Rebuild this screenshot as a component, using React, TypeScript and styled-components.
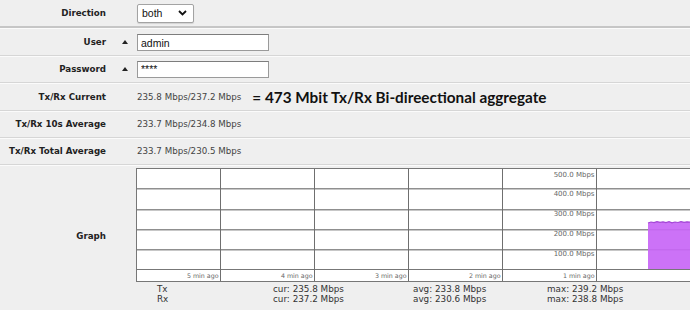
import React from "react";
import styled, { createGlobalStyle } from "styled-components";

const Global = createGlobalStyle`
  html, body { margin: 0; padding: 0; }
  body {
    background: #efefef;
    overflow: hidden;
    font-family: "DejaVu Sans", Verdana, sans-serif;
    color: #333;
  }
`;

const Page = styled.div`
  width: 690px;
  height: 310px;
  overflow: hidden;
  display: flex;
  flex-direction: column;
`;

const Row = styled.div<{ $h: number; $strong?: boolean }>`
  box-sizing: border-box;
  height: ${(p) => p.$h}px;
  display: grid;
  grid-template-columns: 106px 31px 1fr;
  align-items: center;
  border-bottom: ${(p) => (p.$strong ? "2px solid #c6c6c6" : "1px solid #d6d6d6")};
  box-shadow: 0 1px 0 #fbfbfb;
`;

const Label = styled.div`
  font-weight: bold;
  font-size: 8.7px;
  color: #222;
  text-align: right;
  white-space: nowrap;
`;

const MarkerCell = styled.div`
  display: flex;
  justify-content: flex-end;
  padding-right: 9px;
`;

const Marker = styled.span`
  width: 0;
  height: 0;
  border-left: 3px solid transparent;
  border-right: 3px solid transparent;
  border-bottom: 4px solid #222;
`;

const Cell = styled.div<{ $pt?: number }>`
  display: flex;
  align-items: center;
  padding-top: ${(p) => p.$pt ?? 0}px;
  min-width: 0;
`;

const SelectBox = styled.div`
  box-sizing: border-box;
  width: 57px;
  height: 19px;
  display: flex;
  align-items: center;
  justify-content: space-between;
  padding: 0 6px 0 4px;
  background: #fff;
  border: 1px solid #a3a3a3;
  border-radius: 2px;
  box-shadow: 0 1px 1px rgba(0, 0, 0, 0.12);
  font-family: "Liberation Sans", Arial, sans-serif;
  font-size: 10.5px;
  color: #111;
`;

const TextInput = styled.input`
  box-sizing: border-box;
  width: 132px;
  height: 17px;
  padding: 0 3px;
  margin: 0;
  background: #fff;
  border: 1px solid #9a9a9a;
  border-top-color: #7d7d7d;
  border-radius: 0;
  font-family: "Liberation Sans", Arial, sans-serif;
  font-size: 10.5px;
  color: #111;
  outline: none;
`;

const Value = styled.span`
  font-size: 8.7px;
  color: #444;
  white-space: nowrap;
`;

const Note = styled.span`
  margin-left: 11px;
  font-family: Lato, "Open Sans", sans-serif;
  font-weight: bold;
  font-size: 15.3px;
  color: #111;
  white-space: nowrap;
`;

const GraphRow = styled.div`
  box-sizing: border-box;
  height: 142px;
  display: grid;
  grid-template-columns: 106px 30px 1fr;
  align-items: center;
`;

const GraphArea = styled.div`
  align-self: start;
  padding-top: 3px;
  display: flex;
  flex-direction: column;
  min-width: 0;
  overflow: hidden;
`;

const ChartSvg = styled.svg`
  display: block;
  flex-shrink: 0;
`;

const Legend = styled.div`
  margin-top: 2px;
  display: grid;
  grid-template-columns: 116px 140px 134px auto;
  padding-left: 21px;
  font-size: 8.8px;
  line-height: 10px;
  color: #333;
  white-space: nowrap;
`;

const Chevron = () => (
  <svg width="9" height="6" viewBox="0 0 9 6">
    <path d="M1 1 L4.5 4.5 L8 1" fill="none" stroke="#111" strokeWidth="1.8" />
  </svg>
);

const vLines = [84, 178, 272, 366, 460];
const hLines = [20, 41, 61, 81];
const times = ["5 min ago", "4 min ago", "3 min ago", "2 min ago", "1 min ago"];
const yLabels = [
  { t: "500.0 Mbps", y: 9 },
  { t: "400.0 Mbps", y: 28 },
  { t: "300.0 Mbps", y: 48 },
  { t: "200.0 Mbps", y: 68 },
  { t: "100.0 Mbps", y: 88 },
];

const wave =
  "M512 55 L515 54 L518 54.6 L521 53.6 L524 54.4 L527 53.8 L530 54.6 L533 53.7 L536 54.8 L539 54 L542 54.5 L545 53.6 L548 54.3 L551 53.8 L554 54.2 L558 54";

const Chart = () => (
  <ChartSvg width={556} height={114} viewBox="0 0 556 114">
    <rect x={0} y={0} width={556} height={114} fill="#fff" />
    {hLines.map((y) => (
      <rect key={y} x={0} y={y} width={556} height={1.5} fill="#8f8f8f" />
    ))}
    <rect x={0} y={101} width={556} height={1} fill="#777" />
    {vLines.map((x) => (
      <rect key={x} x={x} y={0} width={1} height={114} fill="#6f6f6f" />
    ))}
    <path d={`${wave} L558 101 L512 101 Z`} fill="#c866f6" fillOpacity={0.92} />
    <path d={wave} fill="none" stroke="#a446d6" strokeWidth={1.2} />
    <rect x={0.5} y={0.5} width={560} height={113} fill="none" stroke="#777" />
    {times.map((t, i) => (
      <text
        key={t}
        x={vLines[i] - 1.5}
        y={110}
        textAnchor="end"
        fontFamily="DejaVu Sans, Verdana, sans-serif"
        fontSize={6.3}
        fill="#666"
      >
        {t}
      </text>
    ))}
    {yLabels.map((l) => (
      <text
        key={l.t}
        x={458.5}
        y={l.y}
        textAnchor="end"
        fontFamily="DejaVu Sans, Verdana, sans-serif"
        fontSize={7}
        fill="#666"
      >
        {l.t}
      </text>
    ))}
  </ChartSvg>
);

export default function App() {
  return (
    <Page>
      <Global />
      <Row $h={28} $strong>
        <Label>Direction</Label>
        <div />
        <Cell>
          <SelectBox>
            <span>both</span>
            <Chevron />
          </SelectBox>
        </Cell>
      </Row>
      <Row $h={28}>
        <Label>User</Label>
        <MarkerCell>
          <Marker />
        </MarkerCell>
        <Cell $pt={2}>
          <TextInput type="text" readOnly value="admin" />
        </Cell>
      </Row>
      <Row $h={27}>
        <Label>Password</Label>
        <MarkerCell>
          <Marker />
        </MarkerCell>
        <Cell>
          <TextInput type="text" readOnly value="****" />
        </Cell>
      </Row>
      <Row $h={28}>
        <Label>Tx/Rx Current</Label>
        <div />
        <Cell>
          <Value>235.8 Mbps/237.2 Mbps</Value>
          <Note>= 473 Mbit Tx/Rx Bi-direectional aggregate</Note>
        </Cell>
      </Row>
      <Row $h={27}>
        <Label>Tx/Rx 10s Average</Label>
        <div />
        <Cell>
          <Value>233.7 Mbps/234.8 Mbps</Value>
        </Cell>
      </Row>
      <Row $h={27}>
        <Label>Tx/Rx Total Average</Label>
        <div />
        <Cell>
          <Value>233.7 Mbps/230.5 Mbps</Value>
        </Cell>
      </Row>
      <GraphRow>
        <Label>Graph</Label>
        <div />
        <GraphArea>
          <Chart />
          <Legend>
            <span>Tx</span>
            <span>cur: 235.8 Mbps</span>
            <span>avg: 233.8 Mbps</span>
            <span>max: 239.2 Mbps</span>
            <span>Rx</span>
            <span>cur: 237.2 Mbps</span>
            <span>avg: 230.6 Mbps</span>
            <span>max: 238.8 Mbps</span>
          </Legend>
        </GraphArea>
      </GraphRow>
    </Page>
  );
}
